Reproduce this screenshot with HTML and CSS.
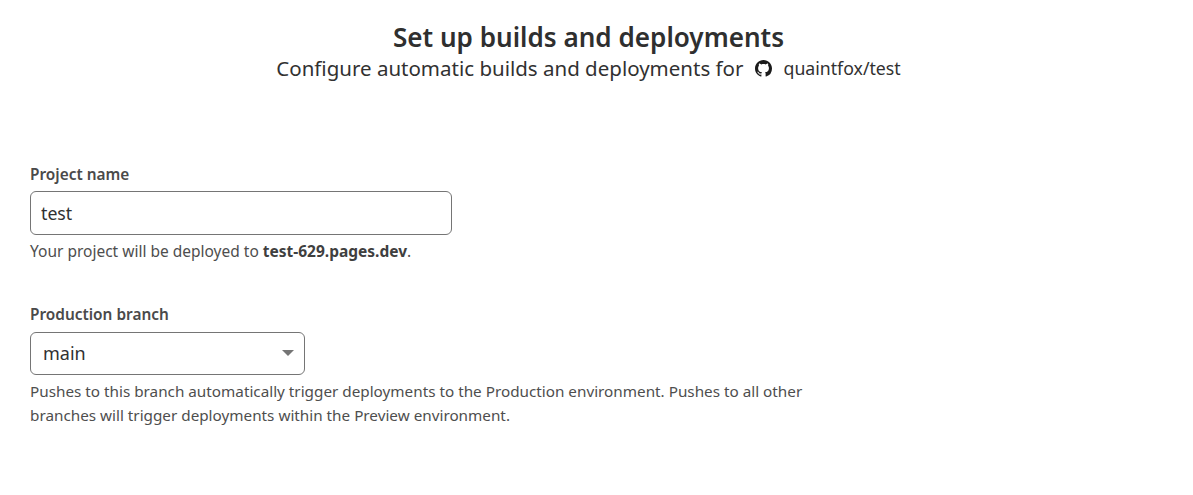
FILE: index.html
```html
<!DOCTYPE html>
<html lang="en">
<head>
  <meta charset="UTF-8" />
  <title>Set up builds and deployments</title>
  <link rel="stylesheet" href="styles.css">
</head>
<body>
  <div class="container">
    <header class="page-head">
      <h1>Set up builds and deployments</h1>
      <p class="subtitle">
        <span>Configure automatic builds and deployments for</span>
        <svg class="gh-icon" viewBox="0 0 16 16" width="17" height="17" aria-hidden="true">
          <path fill="#1b1b1b" d="M8 0C3.58 0 0 3.58 0 8c0 3.54 2.29 6.53 5.47 7.59.4.07.55-.17.55-.38 0-.19-.01-.82-.01-1.49-2.01.37-2.53-.49-2.69-.94-.09-.23-.48-.94-.82-1.13-.28-.15-.68-.52-.01-.53.63-.01 1.08.58 1.23.82.72 1.21 1.87.87 2.33.66.07-.52.28-.87.51-1.07-1.78-.2-3.64-.89-3.64-3.95 0-.87.31-1.59.82-2.15-.08-.2-.36-1.02.08-2.12 0 0 .67-.21 2.2.82.64-.18 1.32-.27 2-.27s1.36.09 2 .27c1.53-1.04 2.2-.82 2.2-.82.44 1.1.16 1.92.08 2.12.51.56.82 1.27.82 2.15 0 3.07-1.87 3.75-3.65 3.95.29.25.54.73.54 1.48 0 1.07-.01 1.93-.01 2.2 0 .21.15.46.55.38A8.01 8.01 0 0 0 16 8c0-4.42-3.58-8-8-8z"/>
        </svg>
        <span class="repo">quaintfox/test</span>
      </p>
    </header>

    <div class="field field-name">
      <label for="projectName">Project name</label>
      <input id="projectName" type="text" value="test" autocomplete="off" />
      <p class="hint">Your project will be deployed to <b>test-629.pages.dev</b>.</p>
    </div>

    <div class="field field-branch">
      <label for="branch">Production branch</label>
      <div class="select-box" id="branch">
        <span>main</span>
        <i class="caret"></i>
      </div>
      <p class="hint">Pushes to this branch automatically trigger deployments to the Production environment. Pushes to all other branches will trigger deployments within the Preview environment.</p>
    </div>
  </div>
</body>
</html>
```

FILE: styles.css
```css
* {
  box-sizing: border-box;
}
body {
  margin: 0;
  background: #fff;
  color: #313131;
  font-family: "Noto Sans", "Open Sans", sans-serif;
}
.container {
  padding: 21px 30px 0;
}
.page-head {
  padding-right: 16px;
  text-align: center;
}
h1 {
  margin: 0;
  font-size: 26.1px;
  line-height: 32px;
  font-weight: 600;
  color: #2f2f2f;
}
.subtitle {
  margin: 0;
  display: flex;
  justify-content: center;
  align-items: center;
  font-size: 20.5px;
  line-height: 31px;
  color: #313131;
}
.gh-icon {
  margin: 0 12px 0 11px;
}
.repo {
  font-size: 17.7px;
}
.field {
  display: flex;
  flex-direction: column;
  align-items: flex-start;
}
.field-name {
  margin-top: 81px;
}
.field-branch {
  margin-top: 42px;
}
label {
  font-size: 15.4px;
  line-height: 20px;
  font-weight: 600;
  color: #4a4a4a;
}
.field-name label {
  margin-bottom: 6px;
}
.field-branch label {
  margin-bottom: 7px;
}
input[type="text"] {
  width: 422px;
  height: 44px;
  padding: 0 10px;
  border: 1px solid #757575;
  border-radius: 6px;
  font: inherit;
  font-size: 17.7px;
  color: #313131;
  outline: none;
}
.select-box {
  width: 275px;
  height: 43px;
  padding: 0 10px 2px 12px;
  border: 1px solid #757575;
  border-radius: 6px;
  display: flex;
  align-items: center;
  justify-content: space-between;
  font-size: 18px;
  color: #313131;
}
.caret {
  width: 0;
  height: 0;
  border-left: 6px solid transparent;
  border-right: 6px solid transparent;
  border-top: 6px solid #757575;
}
.hint {
  margin: 4px 0 0;
  max-width: 790px;
  font-size: 15.5px;
  line-height: 24px;
  color: #4e4e4e;
}
.field-branch .hint {
  font-size: 15.28px;
}
.hint b {
  font-weight: 700;
  color: #3f3f3f;
}
```
